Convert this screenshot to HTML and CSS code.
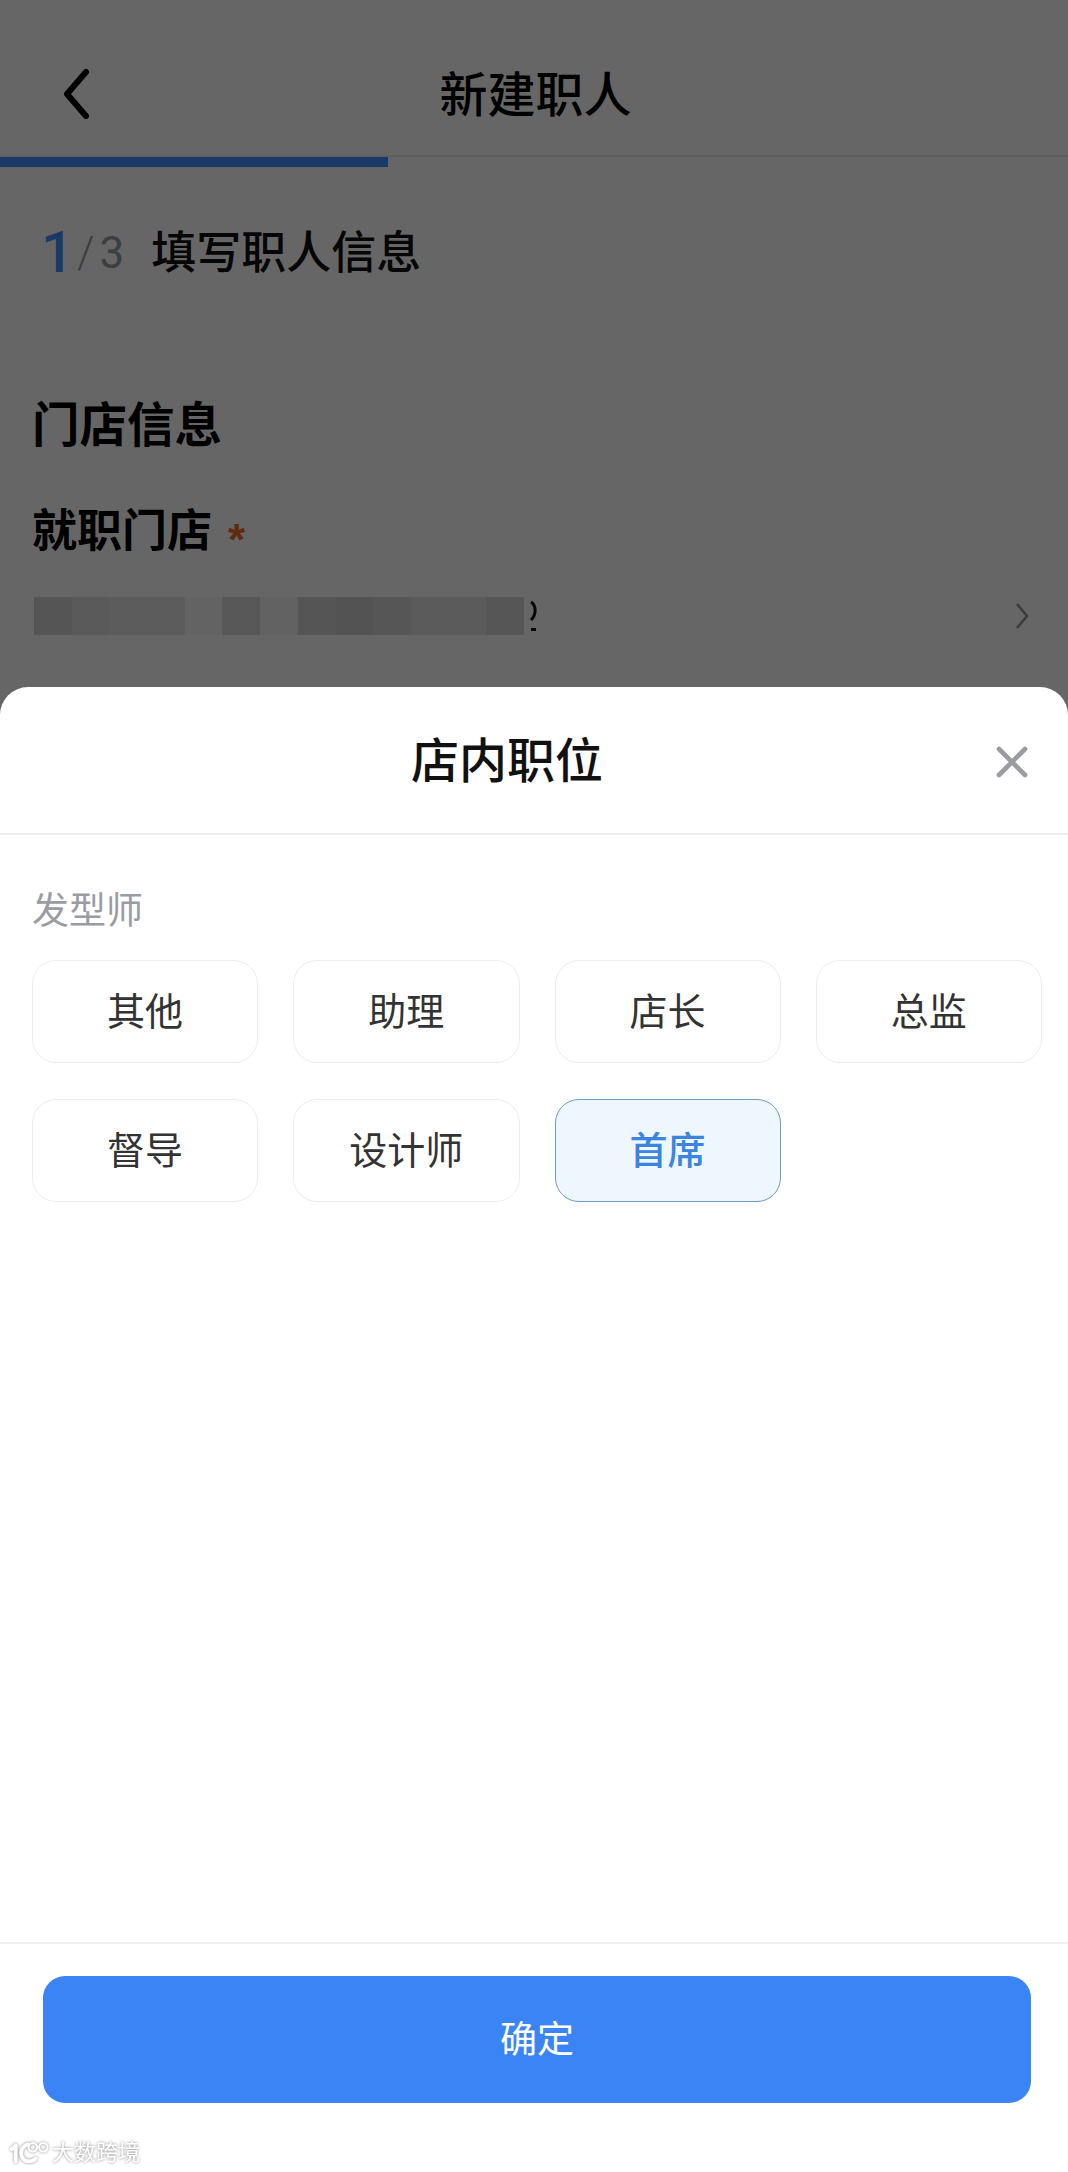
FILE: index.html
```html
<!DOCTYPE html>
<html lang="zh-CN">
<head>
<meta charset="utf-8">
<title>新建职人</title>
<link rel="stylesheet" href="styles.css">
</head>
<body>
<div class="page">
  <header class="nav">
    <svg class="back" width="30" height="50" viewBox="0 0 30 50"><path d="M25 3 L6 25 L25 47" fill="none" stroke="#000" stroke-width="6" stroke-linecap="round" stroke-linejoin="round"/></svg>
    <h1 class="nav-title">新建职人</h1>
  </header>
  <div class="progress"><div class="progress-fill"></div></div>
  <div class="step">
    <span class="step-num">1</span><span class="step-slash">/</span><span class="step-total">3</span>
    <span class="step-title">填写职人信息</span>
  </div>
  <h2 class="section">门店信息</h2>
  <div class="field-label">就职门店<span class="req">*</span></div>
  <div class="field-value">
    <div class="value-wrap">
      <div class="mosaic">
        <i class="m1"></i><i class="m2"></i><i class="m3"></i><i class="m4"></i><i class="m5"></i><i class="m6"></i><i class="m7"></i><i class="m8"></i><i class="m9"></i><i class="m10"></i><i class="m11"></i><i class="m12"></i><i class="m13"></i>
      </div>
      <svg class="tail" width="10" height="40" viewBox="0 0 10 40"><path d="M1 6 C6 9 7 18 1 24" fill="none" stroke="#111" stroke-width="3"/><rect x="1" y="32" width="5" height="3" fill="#111"/></svg>
    </div>
    <svg class="chev" width="14" height="28" viewBox="0 0 14 28"><path d="M2 2 L12 14 L2 26" fill="none" stroke="#969696" stroke-width="2.6"/></svg>
  </div>
</div>
<div class="mask"></div>
<section class="sheet">
  <div class="sheet-head">
    <h3 class="sheet-title">店内职位</h3>
    <svg class="close" width="34" height="34" viewBox="0 0 34 34"><path d="M4 4 L30 30 M30 4 L4 30" fill="none" stroke="#9a9ca2" stroke-width="4.6" stroke-linecap="round"/></svg>
  </div>
  <div class="sheet-body">
    <div class="group-label">发型师</div>
    <div class="chips">
      <div class="chip">其他</div>
      <div class="chip">助理</div>
      <div class="chip">店长</div>
      <div class="chip">总监</div>
      <div class="chip">督导</div>
      <div class="chip">设计师</div>
      <div class="chip chip-on">首席</div>
    </div>
  </div>
  <div class="sheet-foot">
    <button class="confirm">确定</button>
  </div>
</section>
<div class="wm">
  <svg width="40" height="26" viewBox="0 0 42 26"><g fill="none" stroke="#fff" stroke-linecap="round"><path d="M6 5 L2 9 M6 5 V22" stroke-width="4"/><path d="M19 4 C12 6 10 13 13 18 C16 23 23 23 27 19" stroke-width="4"/><circle cx="24" cy="7" r="4.5" stroke-width="2"/><circle cx="35" cy="7" r="4.5" stroke-width="2"/></g></svg>
  <span class="wm-text">大数跨境</span>
</div>
</body>
</html>
```

FILE: styles.css
```css
* { box-sizing: border-box; }
html, body { margin: 0; padding: 0; }
body {
  position: relative;
  width: 1068px;
  height: 2172px;
  overflow: hidden;
  background: #fff;
  color: #000;
  font-family: "Liberation Sans", "Noto Sans CJK SC", sans-serif;
}
h1, h2, h3 { margin: 0; font-weight: 500; }

.page { height: 687px; }
.nav {
  height: 157px;
  position: relative;
  display: flex;
  align-items: center;
  justify-content: center;
  padding-top: 37px;
  border-bottom: 2px solid #eee;
}
.back { position: absolute; left: 61px; top: 69px; }
.nav-title { font-size: 48px; line-height: 60px; font-weight: 500; margin-left: 3px; }
.progress { height: 10px; }
.progress-fill { width: 388px; height: 10px; background: #4590ff; }

.step {
  display: flex;
  align-items: center;
  height: 60px;
  margin-top: 55px;
  padding-left: 41px;
}
.step-num { font-family: Roboto, sans-serif; font-size: 58px; font-weight: 500; color: #4590ff; line-height: 60px; }
.step-slash { font-family: Roboto, sans-serif; font-size: 44px; font-weight: 300; color: #9a9ca2; margin-left: 3px; line-height: 60px; padding-top: 2px; }
.step-total { font-family: Roboto, sans-serif; font-size: 44px; color: #9a9ca2; margin-left: 5px; line-height: 60px; padding-top: 2px; }
.step-title { font-size: 45px; font-weight: 500; color: #111; margin-left: 27px; line-height: 60px; padding-top: 3px; }

.section { font-size: 47.5px; line-height: 60px; font-weight: 700; margin: 114px 0 0 32px; }
.field-label { height: 60px; font-size: 45px; line-height: 60px; font-weight: 700; margin: 46px 0 0 32px; display: flex; }
.req { color: #f26a1f; font-size: 44px; margin-left: 16px; font-weight: 700; line-height: 76px; }
.field-value {
  display: flex;
  align-items: center;
  justify-content: space-between;
  margin: 34px 39px 0 34px;
  height: 40px;
}
.value-wrap { display: flex; align-items: center; }
.mosaic { display: flex; width: 490px; height: 38px; }
.mosaic i { display: block; flex: 1; }
.m1 { background: #d4d4d4; }
.m2 { background: #e1e1e1; }
.m3 { background: #e6e6e6; }
.m4 { background: #e6e6e6; }
.m5 { background: #f7f7f7; }
.m6 { background: #d9d9d9; }
.m7 { background: #f5f5f5; }
.m8 { background: #d4d4d4; }
.m9 { background: #cfcfcf; }
.m10 { background: #d6d6d6; }
.m11 { background: #e3e3e3; }
.m12 { background: #e3e3e3; }
.m13 { background: #d6d6d6; }
.tail { display: block; margin-left: 6px; }

.mask { position: absolute; inset: 0; background: rgba(0, 0, 0, 0.6); }

.sheet {
  position: absolute;
  left: 0;
  right: 0;
  top: 687px;
  bottom: 0;
  background: #fff;
  border-radius: 28px 28px 0 0;
  display: flex;
  flex-direction: column;
}
.sheet-head {
  height: 148px;
  display: flex;
  align-items: center;
  justify-content: center;
  position: relative;
  border-bottom: 2px solid #eeeeee;
  flex: none;
}
.sheet-title { font-size: 48px; line-height: 60px; font-weight: 500; color: #111; padding-right: 54px; padding-top: 3px; }
.close { position: absolute; left: 995px; top: 58px; }

.sheet-body { flex: 1; padding: 52px 26px 0 32px; }
.group-label { font-size: 37px; line-height: 50px; color: #9a9ca3; }
.chips {
  display: grid;
  grid-template-columns: repeat(4, 1fr);
  column-gap: 35px;
  row-gap: 36px;
  margin-top: 23px;
}
.chip {
  height: 103px;
  display: flex;
  align-items: center;
  justify-content: center;
  border: 1.5px solid #ececec;
  border-radius: 24px;
  font-size: 38px;
  color: #333;
  padding-bottom: 6px;
}
.chip-on {
  background: #eef6fe;
  border-color: #6d9bc9;
  color: #3b84e0;
  font-weight: 500;
}

.sheet-foot {
  flex: none;
  height: 230px;
  border-top: 2px solid #eeeeee;
  padding: 32px 37px 0 43px;
}
.confirm {
  display: block;
  width: 100%;
  height: 127px;
  border: 0;
  border-radius: 22px;
  background: #3b84f6;
  color: #fff;
  font-family: inherit;
  font-size: 37px;
  padding: 0 0 6px;
}

.wm {
  position: absolute;
  left: 10px;
  top: 2138px;
  display: flex;
  align-items: center;
  gap: 2px;
  filter: drop-shadow(0 0 1.5px #8a8a8a);
}
.wm-text { font-size: 22px; line-height: 30px; color: #fff; }
```
